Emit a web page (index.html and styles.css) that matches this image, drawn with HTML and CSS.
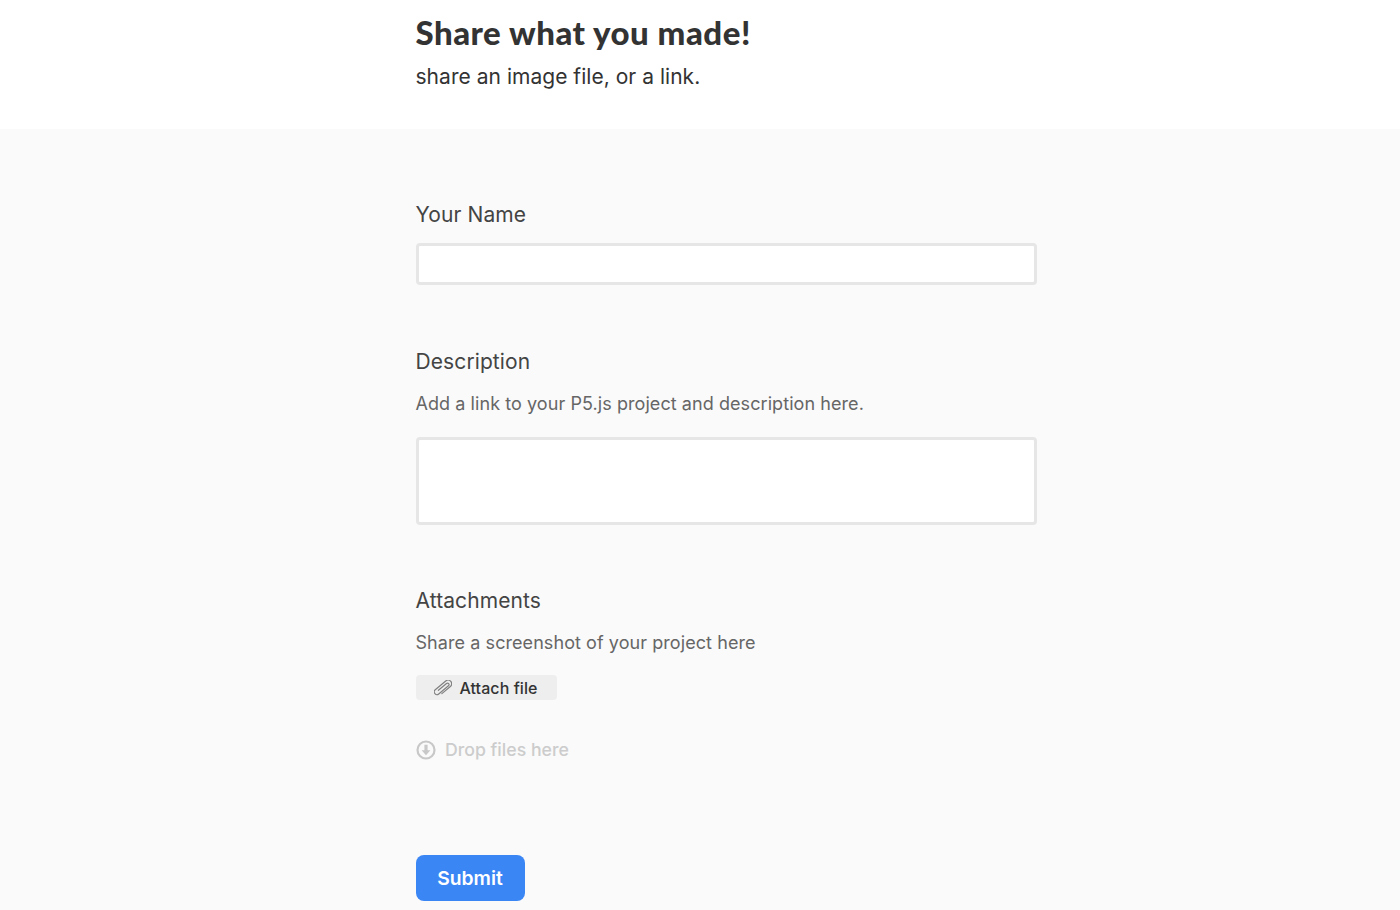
FILE: index.html
```html
<!DOCTYPE html>
<html lang="en">
<head>
<meta charset="utf-8">
<title>Share what you made!</title>
<link rel="stylesheet" href="styles.css">
</head>
<body>
<header class="header">
  <div class="column">
    <h1 class="title">Share what you made!</h1>
    <p class="subtitle">share an image file, or a link.</p>
  </div>
</header>
<main class="main">
  <form class="column form">
    <div class="field field-name">
      <label class="label">Your Name</label>
      <div class="input input-line"></div>
    </div>
    <div class="field field-desc">
      <label class="label">Description</label>
      <p class="help">Add a link to your P5.js project and description here.</p>
      <div class="input input-area"></div>
    </div>
    <div class="field field-attach">
      <label class="label">Attachments</label>
      <p class="help">Share a screenshot of your project here</p>
      <div class="attach-row">
        <span class="attach">
          <svg class="clip" width="18" height="16" viewBox="0 0 18 16" fill="none" stroke="#7f7f7f" stroke-width="1.15" stroke-linecap="round">
            <g transform="rotate(-40 9 8)">
              <path d="M4.500 11.600H15.600a3.600 3.600 0 0 0 0-7.200H1.900a2.700 2.700 0 0 0 0 5.400H14.600a1.500 1.500 0 0 0 0-3H4"/>
            </g>
          </svg>
          Attach file
        </span>
      </div>
      <div class="drop">
        <svg class="drop-icon" width="20" height="20" viewBox="0 0 20 20">
          <circle cx="10" cy="10" r="8.500" fill="none" stroke="#c8c8c8" stroke-width="2.200"/>
          <path d="M8.400 4.800h3.200v5.400h2.800L10 15.200l-4.400-5h2.800z" fill="#c8c8c8"/>
        </svg>
        <span>Drop files here</span>
      </div>
    </div>
    <button class="submit" type="button">Submit</button>
  </form>
</main>
</body>
</html>
```
FILE: styles.css
```css
* { box-sizing: border-box; }
html, body { margin: 0; padding: 0; height: 100%; overflow: hidden; }
body { font-family: Inter, "Noto Sans", sans-serif; background: #fafafa; color: #333; }
.column { width: 621px; margin-left: 415.5px; }
.header { background: #fff; height: 129px; padding-top: 12px; }
.title { margin: 0; font-family: Lato, sans-serif; font-weight: 900; font-size: 33px; line-height: 40px; letter-spacing: 0.5px; color: #333; }
.subtitle { margin: 10px 0 0; font-size: 21px; line-height: 30px; letter-spacing: 0.03px; color: #333; }
.main { padding-top: 71.5px; }
.form { display: flex; flex-direction: column; align-items: stretch; }
.label { display: block; font-size: 21px; line-height: 28px; letter-spacing: 0.1px; color: #444; }
.help { margin: 13.5px 0 0; font-size: 18px; line-height: 28px; letter-spacing: 0.07px; color: #666; }
.input { background: #fff; border: 3px solid #e6e6e6; border-radius: 4px; }
.input-line { height: 42px; margin-top: 14.5px; }
.input-area { height: 88px; margin-top: 19.5px; }
.field-desc { margin-top: 63px; }
.field-attach { margin-top: 62px; }
.attach-row { margin-top: 18.5px; display: flex; }
.attach { display: inline-flex; align-items: center; gap: 8px; height: 25px; width: 141px; padding-left: 18px; background: #eee; border-radius: 4px; font-size: 16px; font-weight: 500; letter-spacing: 0.06px; color: #333; }
.clip { flex: none; }
.drop { display: flex; align-items: center; gap: 9.5px; margin-top: 38px; font-size: 17.7px; font-weight: 500; line-height: 24px; color: #ccc; }
.drop-icon { flex: none; }
.submit { margin-top: 93px; width: 109px; height: 46px; border: 0; border-radius: 8px; background: #3b86f5; color: #fff; font-family: Inter, sans-serif; font-size: 19.3px; font-weight: 600; padding: 0; }
```
